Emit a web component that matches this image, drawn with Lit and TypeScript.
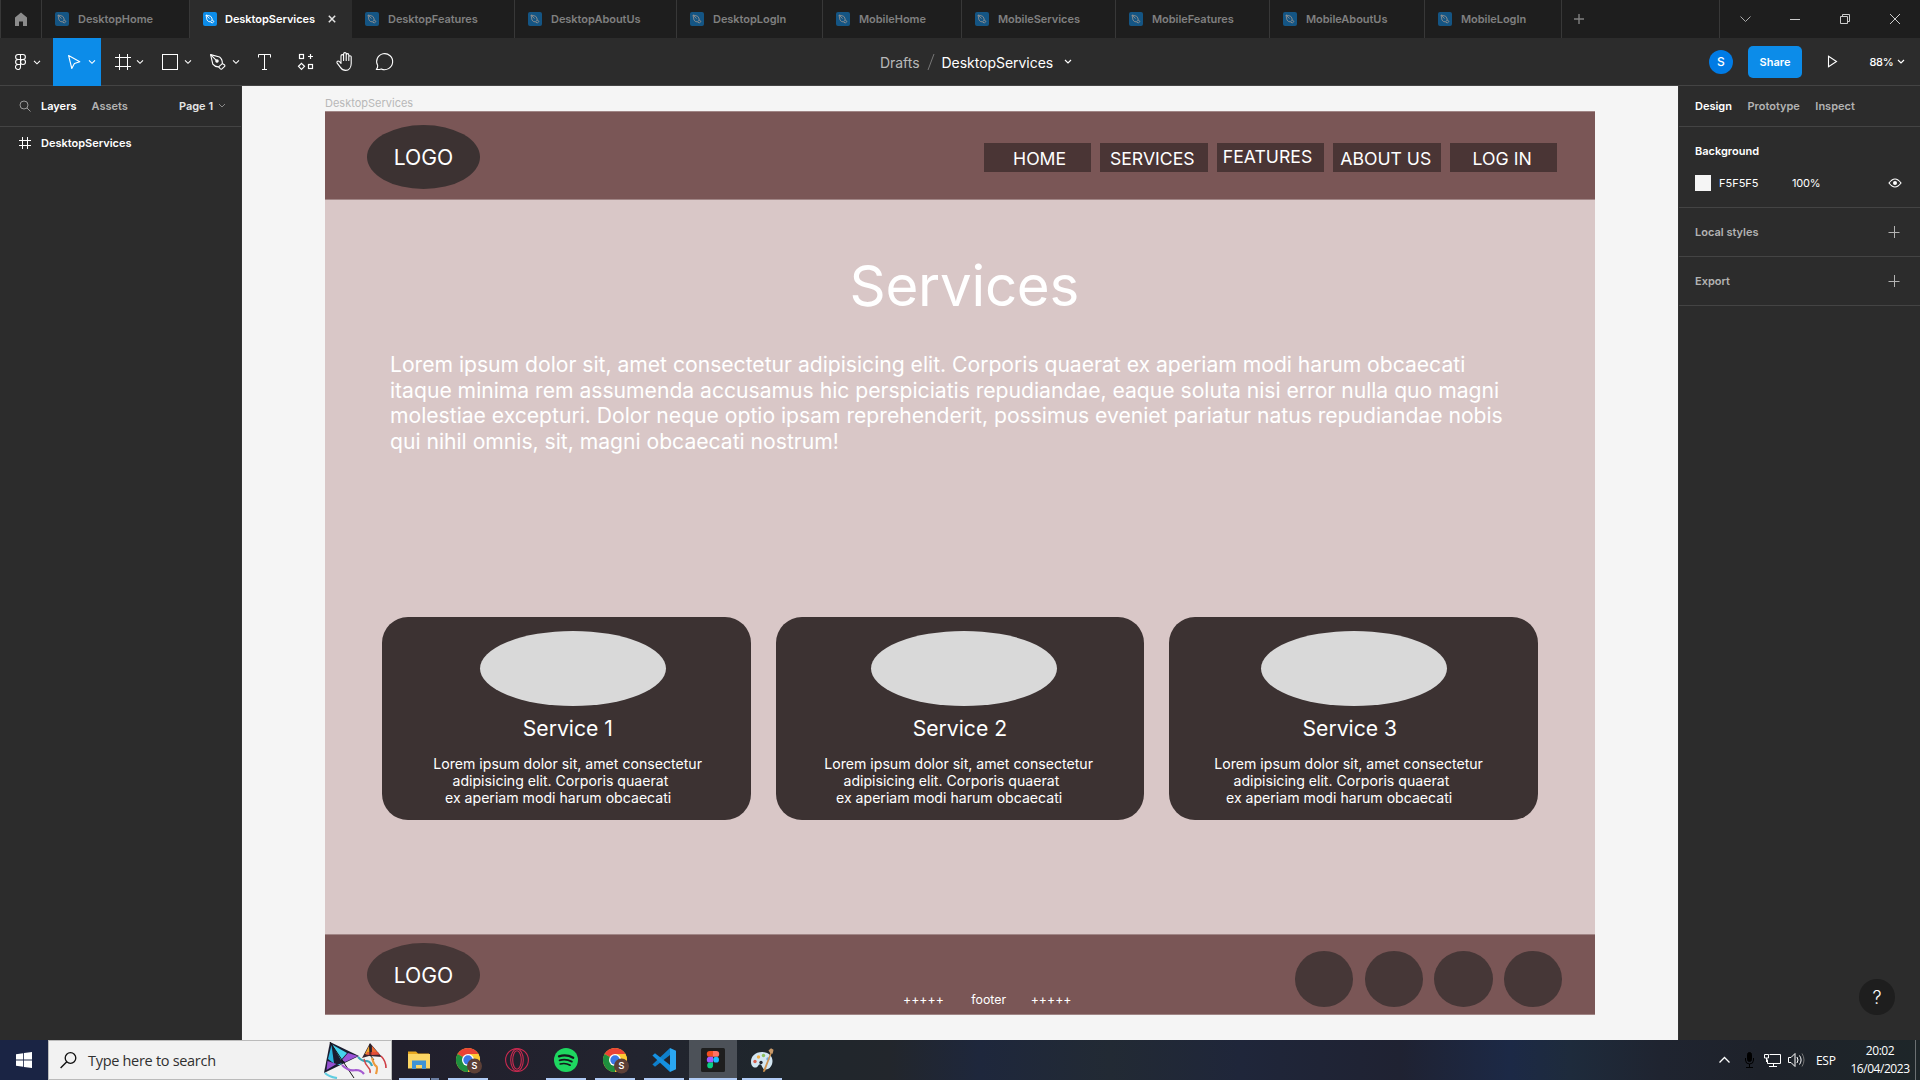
import { LitElement, html, svg, css } from "lit";
import { customElement } from "lit/decorators.js";
import { classMap } from "lit/directives/class-map.js";
import { styleMap } from "lit/directives/style-map.js";

interface Tab { name: string; width: number; active?: boolean }

const TABS: Tab[] = [
  { name: "DesktopHome", width: 148 },
  { name: "DesktopServices", width: 162, active: true },
  { name: "DesktopFeatures", width: 163 },
  { name: "DesktopAboutUs", width: 162 },
  { name: "DesktopLogIn", width: 146 },
  { name: "MobileHome", width: 139 },
  { name: "MobileServices", width: 154 },
  { name: "MobileFeatures", width: 154 },
  { name: "MobileAboutUs", width: 155 },
  { name: "MobileLogIn", width: 137 },
];

const chevron = (x: number, y: number) =>
  svg`<path d="M${x} ${y - 1.5}l3 3l3 -3" fill="none" stroke="#fff" stroke-width="1.1"/>`;

const TOOLS = [
  { name: "menu", width: 53, art: svg`
      <g fill="none" stroke="#fff" stroke-width="1.1">
        <path d="M20.5 16.5h-2.4a2.5 2.5 0 0 0 0 5h2.4zM20.5 21.5h-2.4a2.5 2.5 0 0 0 0 5h2.4zM20.5 26.5h-2.4a2.5 2.5 0 1 0 2.4 2.5zM20.5 16.5h2.4a2.5 2.5 0 0 1 0 5h-2.4z"/>
        <circle cx="23" cy="24" r="2.5"/>
      </g>${chevron(34, 24.3)}` },
  { name: "move", width: 48, active: true, art: svg`
      <path d="M15.6 17.6l11.2 6.2l-5.4 1.7l-2.6 5z" fill="none" stroke="#fff" stroke-width="1.1" stroke-linejoin="round"/>${chevron(36, 23.8)}` },
  { name: "frame", width: 48, art: svg`
      <path d="M18.5 16v16M26.5 16v16M14 19.5h16M14 28.5h16" fill="none" stroke="#fff"/>${chevron(36, 23.8)}` },
  { name: "shape", width: 48, art: svg`
      <rect x="13.5" y="16.5" width="15" height="15" fill="none" stroke="#fff"/>${chevron(36, 23.8)}` },
  { name: "pen", width: 48, art: svg`
      <g fill="none" stroke="#fff" stroke-width="1.1" stroke-linejoin="round">
        <path d="M13.6 16.6l9 2.4q3 2.4 2.7 6.6l-3.7 3.3q-3.6 .2 -5.800 -2.7z"/>
        <path d="M13.8 16.8l5.5 5.5"/><circle cx="20" cy="23.1" r="1.2" fill="#fff"/>
        <path d="M25.3 25.6l2.4 1.4l.2 1.2l-3.2 3l-1.2 -.2l-1.9 -2.1"/>
      </g>${chevron(36, 23.8)}` },
  { name: "text", width: 40, art: svg`
      <path d="M13.5 19.5v-3h12v3M19.5 16.5v15M17 31.5h5" fill="none" stroke="#fff"/>` },
  { name: "resources", width: 41, art: svg`
      <g fill="none" stroke="#fff" stroke-width="1.2">
        <rect x="14.5" y="16.5" width="4" height="4"/><rect x="23.5" y="26.5" width="4" height="4"/>
        <path d="M25.5 16v5M23 18.5h5M16.5 25.3l3 3l-3 3l-3 -3z"/>
      </g>` },
  { name: "hand", width: 39, art: svg`
      <path d="M14.5 26v-7.5a1.3 1.3 0 0 1 2.6 0v4.5v-6.5a1.3 1.3 0 0 1 2.6 0v6.5v-5.5a1.3 1.3 0 0 1 2.6 0v5.5v-3.5a1.2 1.2 0 0 1 2.4 0v6.5c0 4 -2.2 7 -5.5 7c-2.6 0 -4 -1 -5.3 -3l-3.4 -4.6c-.6 -1.4 1.2 -2.3 2.3 -1.3z" fill="none" stroke="#fff" stroke-width="1.1" stroke-linejoin="round" transform="translate(.5 -.6)"/>` },
  { name: "comment", width: 40, art: svg`
      <path d="M11.3 31.5q1.7 -2.2 1.4 -3.9a8 8 0 1 1 3.6 3.3q-2.2 .8 -5 .6z" fill="none" stroke="#fff" stroke-width="1.1" stroke-linejoin="round"/>` },
];

const NAV = [
  { label: "HOME", cls: "home-link" },
  { label: "SERVICES", cls: "services" },
  { label: "FEATURES", cls: "features" },
  { label: "ABOUT US", cls: "about" },
  { label: "LOG IN", cls: "login" },
];

const plus = () => html`<svg width="12" height="12"><path d="M6.5 0v12M0.5 6.5h11" stroke="#b3b3b3" fill="none"/></svg>`;

const chrome = svg`
  <circle cx="12" cy="12" r="12" fill="#fcc934"/>
  <path d="M12 12L1.6 6A12 12 0 0 1 22.4 6z" fill="#ea4335"/>
  <path d="M12 12L1.6 6A12 12 0 0 0 12 24z" fill="#1e8e3e"/>
  <path d="M12 6H22.4A12 12 0 0 1 12 24l5.2 -9z" fill="#fcc934"/>
  <circle cx="12" cy="12" r="6" fill="#fff"/><circle cx="12" cy="12" r="4.7" fill="#3b78e7"/>
  <circle cx="18.5" cy="18" r="7.5" fill="#5d4037"/>
  <text x="18.5" y="21.3" text-anchor="middle" class="badge">S</text>`;

const APPS = [
  { cls: "pair", art: svg`
      <path d="M1 3.5h8l2 2h11v14h-21z" fill="#e8a820"/><rect x="1" y="6" width="22" height="14.5" fill="#fbd564"/>
      <path d="M5 12.5h14v8.5h-4v-4h-6v4h-4z" fill="#3f93d4"/>` },
  { cls: "open", art: chrome },
  { cls: "", art: svg`
      <g fill="none" stroke="#c92a50" stroke-width="1.1"><circle cx="12" cy="12" r="11.4"/><ellipse cx="12" cy="12" rx="6.3" ry="11"/><ellipse cx="12" cy="12" rx="4.3" ry="9.3"/></g>` },
  { cls: "open", art: svg`
      <circle cx="12" cy="12" r="12" fill="#1ed760"/>
      <g fill="none" stroke="#14181c" stroke-linecap="round"><path d="M5 8.3q7.5 -2.2 14.2 1.4" stroke-width="2.3"/><path d="M5.6 12.3q6.5 -1.8 12.2 1.3" stroke-width="1.9"/><path d="M6.2 16q5.4 -1.4 10 1.2" stroke-width="1.6"/></g>` },
  { cls: "open", art: chrome },
  { cls: "open", art: svg`
      <path d="M18 0l6 2.7v18.6l-6 2.7z" fill="#2aa7f2"/><path d="M18 0v7L3 18.8L.4 16.6z" fill="#0f7fcb"/><path d="M18 24v-7L3 5.2L.4 7.4z" fill="#1590e0"/>` },
  { cls: "open current", art: svg`
      <rect width="24" height="24" rx="1.5" fill="#1e1e1e"/>
      <path d="M12 3H8.7a2.9 2.9 0 0 0 0 5.8H12z" fill="#f24e1e"/><path d="M12 3h3.3a2.9 2.9 0 0 1 0 5.8H12z" fill="#ff7262"/>
      <path d="M12 8.8H8.7a2.9 2.9 0 0 0 0 5.8H12z" fill="#a259ff"/><circle cx="15.1" cy="11.7" r="2.9" fill="#1abcfe"/>
      <path d="M12 14.6H8.7a2.9 2.9 0 1 0 3.3 2.9z" fill="#0acf83"/>` },
  { cls: "open", art: svg`
      <path d="M12 4C5 4 1 8.5 1 13.5c0 4.5 2.5 6.5 5 6s2-3 4-3.2s2 4.8 5 5.2c4.5 .5 7.5-4 7.5-8.5C22.5 8 18.5 4 12 4z" fill="#d3e6f2"/>
      <circle cx="5" cy="13.5" r="1.7" fill="#d8604f"/><circle cx="8.5" cy="9" r="1.7" fill="#f0b04a"/><circle cx="13.5" cy="7.5" r="1.7" fill="#8cc15f"/><circle cx="18" cy="11" r="1.7" fill="#6aa7dd"/><circle cx="11" cy="14.5" r="1.7" fill="#22262f"/>
      <path d="M20.5 4.5l1.3 .6L15 23.5l-2 .5l.4 -2z" fill="#cf9350"/><path d="M18.5 2.5l2.5 -2.3l2.5 1.5l-.8 4l-2.5 -.6z" fill="#c99a6a"/>` },
];

@customElement("app-root")
export class AppRoot extends LitElement {
  static styles = css`
    :host { display: block; width: 1920px; height: 1080px; overflow: hidden; font-family: Inter, "Liberation Sans", sans-serif; color: #fff; background: #2c2c2c; }
    * { box-sizing: border-box; }
    svg { display: block; flex: none; }
    .screen { display: flex; flex-direction: column; height: 1080px; white-space: nowrap; }

    .tabs { display: flex; height: 38px; background: #1e1e1e; border-left: 1px solid #383838; }
    .home { width: 41px; border-right: 1px solid #383838; padding: 12px 0 0 13px; }
    .tab { display: flex; align-items: center; padding-left: 13px; border-right: 1px solid #383838; font-size: 11px; font-weight: 600; letter-spacing: -.04px; color: #808080; }
    .tab svg { opacity: .5; margin-right: 9px; }
    .tab.active { background: #2c2c2c; color: #fff; border-right-color: #2c2c2c; }
    .tab.active svg { opacity: 1; margin-right: 8px; }
    .tab.active svg.close { margin: 0 0 0 13px; }
    .new-tab { padding: 14px 0 0 12px; flex: 1; }
    .controls { display: flex; width: 201px; border-left: 1px solid #383838; }
    .controls svg { width: 50px; height: 38px; }

    .toolbar { display: flex; height: 48px; border-bottom: 1px solid #444; }
    .tools { display: flex; width: 880px; }
    .tool { height: 48px; }
    .tool.active { background: #0c8ce9; }
    .title { display: flex; align-items: center; font-size: 14px; letter-spacing: -.04px; padding-top: 1px; flex: 1; }
    .drafts { color: #b8b8b8; }
    .slash { margin: 0 6.5px 0 7.5px; }
    .title .arrow { margin-left: 11px; }
    .actions { display: flex; align-items: center; width: 211px; font-size: 11px; }
    .avatar { width: 24px; height: 24px; border-radius: 50%; background: #007be5; display: grid; place-items: center; font-weight: 500; font-size: 12px; }
    .share { width: 54px; height: 32px; border-radius: 5px; background: #0c8ce9; display: grid; place-items: center; margin: 0 25px 0 15px; font-weight: 600; }
    .zoom { margin: 0 4px 0 31.5px; font-weight: 500; letter-spacing: -.3px; }

    .work { display: flex; height: 954px; font-size: 11px; }
    .left { width: 242px; border-right: 1px solid #333; }
    .panel-head { display: flex; align-items: center; height: 41px; border-bottom: 1px solid #444; font-weight: 600; color: #b3b3b3; }
    .left .panel-head { padding-left: 19px; }
    .on { color: #fff; }
    .layers { margin: 0 15px 0 10px; }
    .page { margin: 0 5px 0 51px; color: #e5e5e5; }
    .layer { display: flex; align-items: center; height: 32px; gap: 10px; padding-left: 19px; font-weight: 600; }

    .canvas { flex: 1; background: #f5f5f5; padding: 10px 0 0 83px; overflow: hidden; }
    .frame-label { height: 15px; line-height: 14px; color: #b8b8b8; }
    .frame { display: flex; flex-direction: column; width: 1270px; height: 904px; background: #d9c7c7; }
    .bar { display: flex; background: #7a5656; border: solid #a08585; border-width: 1px 0; }
    .head { height: 89px; padding: 13px 38px 0 42px; justify-content: space-between; }
    .logo { width: 113px; height: 64px; border-radius: 50%; background: #3c3232; display: grid; place-items: center; font-size: 21.17px; }
    .nav { display: flex; gap: 9px; padding-top: 18px; }
    .nav-item { width: 107.4px; height: 28.7px; background: #4a3535; font-size: 17.64px; line-height: 28px; }
    .nav-item.home-link { padding: 2.4px 0 0 29px; }
    .nav-item.services { padding: 1.7px 0 0 9.5px; }
    .nav-item.features { padding-left: 6px; line-height: 27px; }
    .nav-item.about { padding: 1.7px 0 0 7px; }
    .nav-item.login { padding: 1.7px 0 0 23px; }
    .body { flex: 1; }
    h1 { margin: 52px 0 0 524.5px; font-size: 56.45px; line-height: 68px; font-weight: 400; letter-spacing: -.25px; }
    .intro { margin: 32px 0 0 65px; font-size: 21.17px; line-height: 25.6px; letter-spacing: -.022px; }
    .cards { display: flex; gap: 24.9px; margin: 163px 0 0 57.4px; }
    .card { width: 368.6px; height: 203px; border-radius: 26px; background: #3c3232; padding-top: 14px; font-size: 14.11px; line-height: 16.8px; }
    .shift { display: flex; flex-direction: column; align-items: center; width: 374px; }
    .card:nth-child(1) .shift { padding-left: 7px; }
    .card:nth-child(2) .shift { padding-left: 2px; }
    .card:nth-child(3) .shift { width: 369px; }
    .photo { width: 186px; height: 75px; border-radius: 50%; background: #d9d9d9; }
    .card h2 { margin: 9px 8px 15px 0; font-size: 21.17px; line-height: 26px; font-weight: 400; }
    .card:nth-child(1) h2 { margin-right: 10px; }
    .l1 { margin-right: 10.5px; }
    .l2 { margin-right: 25px; }
    .l3 { margin-right: 29.5px; }
    .foot { height: 81px; padding: 8px 32.7px 0 42px; }
    .foot .logo, .dot { background: #463737; }
    .note { display: flex; align-items: end; font-size: 12.35px; line-height: 15px; padding-bottom: 7.5px; margin-left: 423px; }
    .note span + span { margin-left: 27.5px; }
    .note span:last-child { margin-left: 24.5px; }
    .dots { display: flex; gap: 11.3px; padding-top: 8px; margin-left: auto; }
    .dot { width: 58.4px; height: 56px; border-radius: 50%; }

    .right { width: 242px; border-left: 1px solid #333; display: flex; flex-direction: column; }
    .right .panel-head { padding-left: 16px; gap: 15.5px; }
    .section { display: flex; align-items: center; justify-content: space-between; height: 49px; border-bottom: 1px solid #444; padding: 0 20px 0 16px; font-weight: 600; color: #b3b3b3; }
    .fill { height: 81px; border-bottom: 1px solid #444; padding: 17px 18px 0 16px; font-weight: 600; }
    .fill-row { display: flex; align-items: center; margin-top: 17px; font-weight: 400; }
    .swatch { width: 16px; height: 16px; background: #f5f5f5; margin-right: 8px; }
    .alpha { margin: 0 auto 0 33.5px; letter-spacing: -.2px; }
    .help { width: 36px; height: 36px; border-radius: 50%; background: #1e1e1e; margin: auto 25px 25px auto; display: grid; place-items: center; font-size: 18px; font-weight: 300; }

    .taskbar { display: flex; height: 40px; font-family: "Open Sans", "Noto Sans", sans-serif;
      background: linear-gradient(90deg, #1a2444 0, #1a2444 50px, #211f2c 400px, #22242f 640px, #1f262c 760px, #22262c 890px, #1e273c 980px, #222a34 1110px, #1f263a 1240px, #1f2232 1400px, #1c2946 1510px, #1e2b3c 1570px, #1f2430 1660px, #1e222a 1760px, #1e2629 1920px); }
    .start { width: 48px; padding: 12px 0 0 16px; }
    .search { display: flex; width: 344px; height: 40px; align-items: center; background: #f2f2f2; border: 1px solid #bbb; color: #303030; font-size: 14.5px; letter-spacing: -.3px; padding-left: 11px; }
    .search .query { margin-left: 11px; flex: 1; }
    .apps { display: flex; gap: 1px; padding-left: 3px; flex: 1; }
    .app { width: 48px; height: 40px; padding: 8px 0 0 12px; }
    .app svg { overflow: visible; }
    .open { background: linear-gradient(#b0cbf5, #b0cbf5) 4px 38px / 40px 2px no-repeat; }
    .pair { background: linear-gradient(90deg, #b0cbf5 31px, #22232e 31px, #22232e 32px, #6c7fa3 32px) 4px 38px / 40px 2px no-repeat; }
    .current { background: linear-gradient(#b0cbf5, #b0cbf5) 0 38px / 48px 2px no-repeat #4c5158; }
    .badge { font: 600 9px Inter, sans-serif; fill: #fff; }
    .tray { display: flex; align-items: center; }
    .lang { font-size: 12px; width: 39px; padding-left: 6px; letter-spacing: -.3px; }
    .clock { width: 62px; font-size: 12px; line-height: 18px; text-align: center; letter-spacing: -.45px; margin-right: 4px; }
    .peek { height: 40px; width: 5px; border-left: 1px solid #6b7072; }
  `;

  private renderTabs() {
    return html`<div class="tabs">
      <div class="home"><svg width="14" height="14"><path d="M1 5.5L7 .5l6 5V14H9v-4.5H5V14H1z" fill="#8c8c8c"/></svg></div>
      ${TABS.map(t => html`<div class=${classMap({ tab: true, active: !!t.active })} style=${styleMap({ width: `${t.width}px` })}>
        <svg width="14" height="14"><rect width="14" height="14" rx="2" fill="#0c8ce9"/><path d="M3 3l4.500 1.200q1.900 1.600 1.700 4l-1.900 1.700q-2.300 0 -3.300 -1.900zM3 3l3.500 3.600M9.200 8.200l1.800 1.200l-1.700 1.700l-1.600 -1.200" fill="none" stroke="#fff" stroke-width=".9"/></svg>
        <span>${t.name}</span>
        ${t.active ? html`<svg class="close" width="8" height="8"><path d="M.8 .8l6.4 6.4M7.2 .8l-6.4 6.4" stroke="#e5e5e5" stroke-width="1.5"/></svg>` : ""}
      </div>`)}
      <div class="new-tab"><svg width="10" height="10"><path d="M5 0v10M0 5h10" stroke="#808080" stroke-width="1.4"/></svg></div>
      <div class="controls">
        <svg><path d="M20.5 16.5l5 5l5 -5" fill="none" stroke="#aaa"/></svg>
        <svg><path d="M20 19.5h10" stroke="#ccc"/></svg>
        <svg><path d="M20.5 16.5h7v7h-7zM22.5 16v-1.5h7v7h-1.5" fill="none" stroke="#ccc"/></svg>
        <svg><path d="M20 14l10 10M30 14l-10 10" stroke="#ccc"/></svg>
      </div>
    </div>`;
  }

  private renderToolbar() {
    return html`<div class="toolbar">
      <div class="tools">${TOOLS.map(t => html`<svg class=${classMap({ tool: true, active: !!t.active })} width=${t.width} height="48">${t.art}</svg>`)}</div>
      <div class="title"><span class="drafts">Drafts</span><svg class="slash" width="8" height="18"><path d="M7 1L1 17" stroke="#777"/></svg><span>DesktopServices</span>
        <svg class="arrow" width="8" height="6"><path d="M1 1l3 3l3 -3" fill="none" stroke="#fff" stroke-width="1.2"/></svg></div>
      <div class="actions"><span class="avatar">S</span><span class="share">Share</span>
        <svg width="11" height="13"><path d="M1.5 1.2l8 5.3l-8 5.3z" fill="none" stroke="#fff" stroke-width="1.1"/></svg>
        <span class="zoom">88%</span><svg width="8" height="6"><path d="M1 1l3 3l3 -3" fill="none" stroke="#fff" stroke-width="1.2"/></svg></div>
    </div>`;
  }

  private renderFrame() {
    return html`<div class="frame">
      <div class="bar head"><div class="logo">LOGO</div>
        <div class="nav">${NAV.map(n => html`<div class="nav-item ${n.cls}">${n.label}</div>`)}</div></div>
      <div class="body">
        <h1>Services</h1>
        <div class="intro">Lorem ipsum dolor sit, amet consectetur adipisicing elit. Corporis quaerat ex aperiam modi harum obcaecati<br>itaque minima rem assumenda accusamus hic perspiciatis repudiandae, eaque soluta nisi error nulla quo magni<br>molestiae excepturi. Dolor neque optio ipsam reprehenderit, possimus eveniet pariatur natus repudiandae nobis<br>qui nihil omnis, sit, magni obcaecati nostrum!</div>
        <div class="cards">${[1, 2, 3].map(i => html`<div class="card"><div class="shift"><div class="photo"></div>
          <h2>${`Service ${i}`}</h2>
          <span class="l1">Lorem ipsum dolor sit, amet consectetur</span><span class="l2">adipisicing elit. Corporis quaerat</span><span class="l3">ex aperiam modi harum obcaecati</span></div></div>`)}</div>
      </div>
      <div class="bar foot"><div class="logo">LOGO</div>
        <div class="note"><span>+++++</span><span>footer</span><span>+++++</span></div>
        <div class="dots"><div class="dot"></div><div class="dot"></div><div class="dot"></div><div class="dot"></div></div></div>
    </div>`;
  }

  private renderTaskbar() {
    return html`<div class="taskbar">
      <div class="start"><svg width="16" height="16"><path d="M0 2.2L7.2 1.2v6.4H0zM8 1.1L16 0v7.6H8zM0 8.4h7.2v6.4L0 13.8zM8 8.4h8V16l-8 -1.1z" fill="#fff"/></svg></div>
      <div class="search"><svg width="17" height="17"><circle cx="10.5" cy="6" r="5.3" fill="none" stroke="#111" stroke-width="1.3"/><path d="M6.8 9.8L.6 16" stroke="#111" stroke-width="1.4"/></svg>
        <span class="query">Type here to search</span>
        <svg width="67" height="38">
          <path d="M6 1L0 32L35 15z" fill="#1a1c30"/>
          <path d="M7.5 4L4 18l6 4.5z" fill="#2bb4dc"/><path d="M8 3.5L23 12l-6 7z" fill="#45d3ee"/>
          <path d="M24 12l10 3l-13 6l-3 -2z" fill="#9a52d6"/><path d="M3.5 20l9 3l-10 6z" fill="#9450cf"/><path d="M13 24l5 -2l-2 2z" fill="#45d3ee"/>
          <path d="M6 1l14 21l10 15" fill="none" stroke="#141414" stroke-width="1"/>
          <path d="M34 16q5 5 9 4q4 1 5 5" fill="none" stroke="#3aa7b8" stroke-width="2.2"/><path d="M18 24q7 7 14 5q5 0 8 4" fill="none" stroke="#a45ad0" stroke-width="2.2"/><path d="M1 32q4 4 12 5" fill="none" stroke="#5fcde0" stroke-width="2.2"/>
          <path d="M46 2l-8 15l7 -2l13 1z" fill="#3a2530"/><path d="M45 5l-4 8l5 1z" fill="#f0a52c"/><path d="M48 5l7 8l-7 1z" fill="#ee6a30"/><path d="M43 11h11l2 3h-14z" fill="#e0443c" opacity=".7"/><path d="M46 3v11l4 5" stroke="#1c1c1c" fill="none"/>
          <path d="M48 17q2 7 4 8t0 8" fill="none" stroke="#ee9a3c" stroke-width="2.2"/><path d="M57 15q5 5 5 12" fill="none" stroke="#cf3d44" stroke-width="1.6"/><path d="M40 18q1 5 4 8t2 6" fill="none" stroke="#d04848" stroke-width="1.4"/>
        </svg></div>
      <div class="apps">${APPS.map(a => html`<div class="app ${a.cls}"><svg width="24" height="24">${a.art}</svg></div>`)}</div>
      <div class="tray">
        <svg width="92" height="40">
          <path d="M1.5 22.5l5 -5l5 5" fill="none" stroke="#fff" stroke-width="1.3"/>
          <g stroke="#000" fill="#000"><rect x="29.5" y="12.5" width="4" height="9" rx="2"/><path d="M27.5 18v2q0 4 4 4t4 -4v-2M31.5 24v3M28 27.5h7" fill="none"/></g>
          <g stroke="#fff" fill="none"><path d="M51.5 14.5h11v9h-13v-4M55.5 23.5v3M51 26.5h8"/><path d="M46.5 14.5h4v3.5h-4zM48.5 18v4"/></g>
          <g stroke="#fff" fill="none" transform="translate(1 0)"><path d="M69.5 17.5h2.5l4 -4v13l-4 -4h-2.5z"/><path d="M78 17q2 3 0 6M80.5 15.5q3.2 4.5 0 9"/><path d="M83 13.5q4 6.5 0 13" stroke="#777"/></g>
        </svg>
        <span class="lang">ESP</span>
        <span class="clock">20:02<br>16/04/2023</span><span class="peek"></span>
      </div>
    </div>`;
  }

  render() {
    return html`<div class="screen">
      ${this.renderTabs()}${this.renderToolbar()}
      <div class="work">
        <div class="left">
          <div class="panel-head"><svg width="12" height="12"><circle cx="5" cy="5" r="4" fill="none" stroke="#999"/><path d="M8 8l3.5 3.5" stroke="#999"/></svg>
            <span class="on layers">Layers</span><span>Assets</span><span class="page">Page 1</span><svg width="8" height="6"><path d="M1 1l3 3l3 -3" fill="none" stroke="#888"/></svg></div>
          <div class="layer"><svg width="12" height="12"><path d="M3.5 0v12M8.5 0v12M0 3.5h12M0 8.5h12" stroke="#fff" fill="none"/></svg><span>DesktopServices</span></div>
        </div>
        <div class="canvas"><div class="frame-label">DesktopServices</div>${this.renderFrame()}</div>
        <div class="right">
          <div class="panel-head"><span class="on">Design</span><span>Prototype</span><span>Inspect</span></div>
          <div class="fill"><div>Background</div><div class="fill-row"><span class="swatch"></span><span>F5F5F5</span><span class="alpha">100%</span>
            <svg width="14" height="10"><path d="M1 5q6 -8 12 0q-6 8 -12 0z" fill="none" stroke="#fff" stroke-width="1.2"/><circle cx="7" cy="5" r="2" fill="#fff"/></svg></div></div>
          <div class="section"><span>Local styles</span>${plus()}</div>
          <div class="section"><span>Export</span>${plus()}</div>
          <div class="help">?</div>
        </div>
      </div>
      ${this.renderTaskbar()}
    </div>`;
  }
}
